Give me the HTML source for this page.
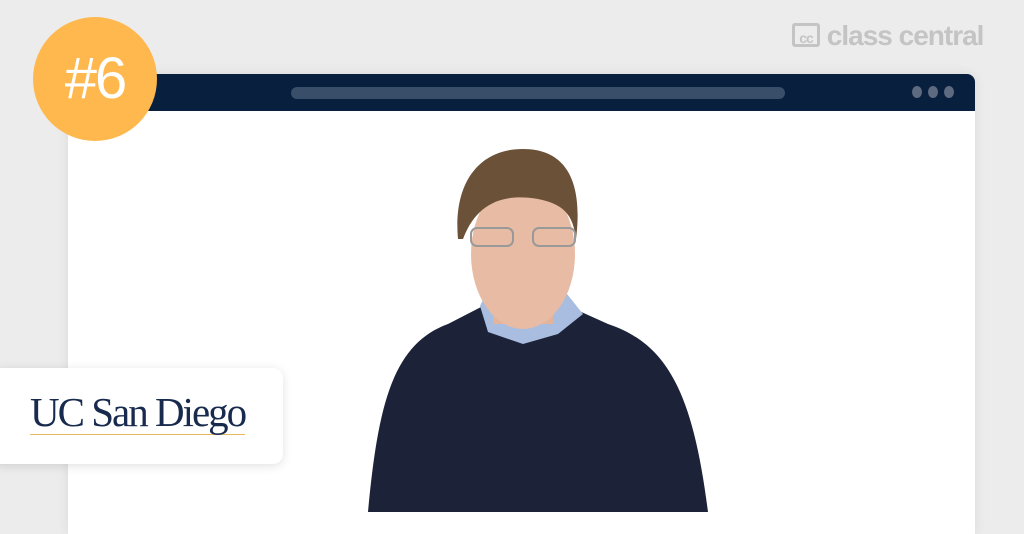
<!DOCTYPE html>
<html><head><style>
body{margin:0;width:1024px;height:512px;background:#ececec;position:relative;overflow:hidden;font-family:"Liberation Sans",sans-serif}
.win{position:absolute;left:68px;top:74px;width:907px;height:460px;background:#fff;border-radius:8px 8px 0 0;box-shadow:0 0 12px rgba(0,0,0,.08);overflow:hidden}
.hdr{height:37px;background:#08203e}
.bar{position:absolute;left:223px;top:13px;width:494px;height:12px;border-radius:6px;background:#394e68}
.dot{position:absolute;top:12px;width:10px;height:12px;border-radius:50%;background:#5e6a80}
.badge{position:absolute;left:33px;top:17px;width:124px;height:124px;border-radius:50%;background:#ffb84d;color:#fff;font-size:58px;text-align:center;line-height:124px;letter-spacing:-2px}
.cc{position:absolute;left:792px;top:20px;color:#c4c4c4;font-size:28px;font-weight:bold;letter-spacing:-1px}
.card{position:absolute;left:-10px;top:368px;width:293px;height:96px;background:#fff;border-radius:10px;box-shadow:0 2px 10px rgba(0,0,0,.12)}
.ucsd{position:absolute;left:40px;top:22px;font-family:"Liberation Serif",serif;font-size:41px;color:#182b4e;letter-spacing:-2px;border-bottom:1.5px solid #e8b961;line-height:44px}
</style></head><body>
<div class="win"><div class="hdr"></div><div class="bar"></div>
<div class="dot" style="left:844px"></div><div class="dot" style="left:860px"></div><div class="dot" style="left:876px"></div>
<svg width="907" height="460" style="position:absolute;left:0;top:0">
<path d="M300 438 C310 330 325 270 380 250 L415 232 L500 232 L540 250 C600 270 625 320 640 438 Z" fill="#1c2238"/>
<path d="M412 232 L420 215 L495 215 L515 240 L490 260 L455 270 L420 258 Z" fill="#a9bde0"/>
<rect x="425" y="190" width="60" height="60" fill="#e3b49c"/>
<ellipse cx="455" cy="180" rx="52" ry="75" fill="#e8bba4"/>
<path d="M390 165 C385 110 410 75 455 75 C500 75 515 110 508 165 C505 140 495 130 470 125 C440 120 410 125 395 165Z" fill="#6b5138"/>
<rect x="403" y="154" width="42" height="18" rx="6" fill="none" stroke="#999" stroke-width="2"/>
<rect x="465" y="154" width="42" height="18" rx="6" fill="none" stroke="#999" stroke-width="2"/>
</svg>
</div>
<div class="badge">#6</div>
<div class="cc"><span style="display:inline-block;width:28px;height:24px;border:3px solid #c4c4c4;border-radius:3px;font-size:14px;line-height:24px;text-align:center;vertical-align:2px;box-sizing:border-box">cc</span> class central</div>
<div class="card"><div class="ucsd">UC San Diego</div></div>
</body></html>
